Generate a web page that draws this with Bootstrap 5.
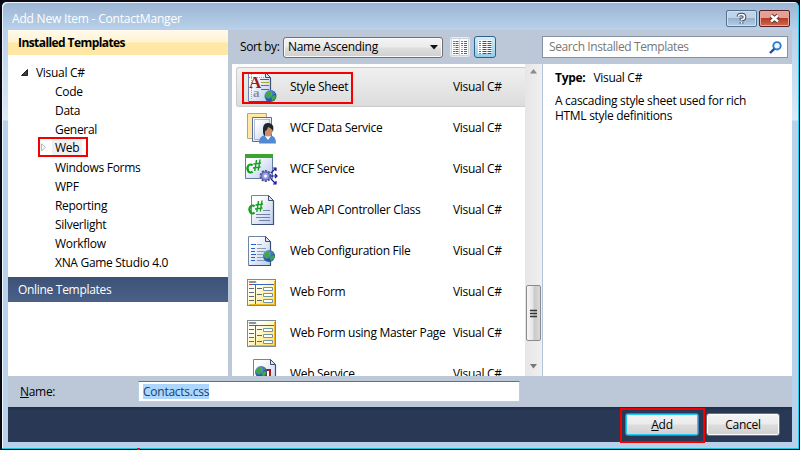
<!DOCTYPE html>
<html lang="en">
<head>
<meta charset="utf-8">
<title>Add New Item - ContactManger</title>
<link href="https://cdn.jsdelivr.net/npm/bootstrap@5.3.0/dist/css/bootstrap.min.css" rel="stylesheet">
<style>
body{width:800px;height:450px;overflow:hidden;background:#0a0a14;font:12px/16px "Open Sans","Noto Sans",sans-serif;color:#000;letter-spacing:-.3px}
.win{width:797px;height:447px;margin:2px 1px 0 2px;background:#b9d1ea;border-right:1px solid #21d0f0;border-bottom:1px solid #21c4dc;border-radius:5px 5px 0 0;padding:0 6px 6px 6px;box-shadow:inset 1px 1px 0 #eef5fc;background-image:linear-gradient(#99b4d3,#b9d1ea 28px,#d8e6f6 110px,#dce9f7 118px,#b9d1ea 119px)}
.titlebar{height:28px;padding:8px 0 0 4px;color:#fff}
.titlebar .cap{letter-spacing:-.2px;line-height:18px}
.wbtn{width:31px;height:17px;border:1px solid #55708f;border-radius:2px;box-shadow:inset 0 0 0 1px #cfe0f2;background:linear-gradient(#bfd3e9 47%,#98b3d0 50%,#b4cce6)}
.wbtn svg,.viewbtn svg{display:block}
.wbtn.close{margin:0 2px;border-color:#5b1f25;box-shadow:inset 0 0 0 1px #e8a79c;background:linear-gradient(#e3a095 45%,#b83b25 50%,#d06a50)}
.client{height:412px;background:#bcc7d8}
.upper{height:346px}
.side{width:220px;background:#fff}
.side-head{height:25px;padding:0 10px;line-height:26px;font-weight:700;background:linear-gradient(#fffaee,#fff3cf 48%,#ffe8a6 52%,#ffe8a6);letter-spacing:-.58px}
.tree{padding-top:8px;height:222px}
.tree div{height:19px;line-height:19px;padding-left:47px}
.tree .root{padding-left:28px;position:relative}
.tree .root svg{position:absolute;left:13px;top:6px}
.tree .sel{position:relative}
.tree .sel b{font-weight:400;background:#f0f0f0;display:inline-block;height:17px;line-height:18px;padding:0 3px;margin-left:-3px;vertical-align:top}
.tree .sel svg{position:absolute;left:33px;top:4px}
.red{position:absolute;border:2px solid #f40000;z-index:3}
.r-web{left:30px;top:-2px;width:50px;height:20px}
.r-style{left:10px;top:8px;width:111px;height:32px}
.r-add{left:-6px;top:-6px;width:85px;height:35px}
.online{height:25px;line-height:26px;padding-left:10px;color:#fff;background:linear-gradient(#3d5277,#4a6086)}
.main{width:560px;margin-left:4px}
.tools{height:34px}
.sortlab{width:39px;margin-left:8px;white-space:nowrap;letter-spacing:-.4px}
.combo{width:160px;height:21px;margin-left:4px;border:1px solid #707070;border-radius:3px;background:linear-gradient(#f4f4f4,#ebebeb 48%,#dedede 52%,#d0d0d0);box-shadow:inset 0 0 0 1px #fbfbfb;padding:0 4px;line-height:18px}
.viewbtn{width:20px;height:20px;margin-left:7px;border:1px solid #e6ecf3;border-radius:2px;background:#c9d4e2;padding:1px}
.viewbtn.on{width:22px;height:22px;margin-left:4px;border:1px solid #2c628b;background:linear-gradient(#d5edfa,#96cdec);border-radius:3px;padding:2px}
.search{width:246px;height:22px;border:1px solid #8492a8;background:#fff;color:#777;padding:0 5px 0 6px;line-height:20px;margin-left:46px;letter-spacing:-.4px}
.list{width:293px;height:312px;background:#fff;overflow:hidden;position:relative;padding-top:3px}
.entry{height:41px;padding-left:15px}
.entry svg{width:30px;height:32px;flex:none;overflow:visible}
.entry .nm{width:163px;margin-left:13px;white-space:nowrap}
.entry.cur{height:40px;margin-left:4px;padding-left:10px;border:1px solid #cbcbcb;border-right:0;border-radius:3px 0 0 3px;background:linear-gradient(#f0f0f0,#dcdcdc)}
.entry .svc{width:32px;margin:0 0 0 -2px}
.sbar{width:17px;background:linear-gradient(90deg,#e6e6e6,#f0f0f0)}
.sbar .up{height:13px;padding-top:5px}
.thumb{width:15px;height:56px;border:1px solid #8b8b8b;border-radius:2px;background:linear-gradient(90deg,#f6f6f6,#e5e5e5 45%,#cacaca 55%,#dadada);margin-top:208px}
.down{margin-top:23px}
.detail{width:250px;background:#fff;border-left:1px solid #b3c3d8;padding:6px 12px;line-height:15px}
.namebar{height:31px;padding-left:12px}
.namelab{width:36px}
.fld{width:382px;height:21px;margin-left:82px;background:#fff;border:1px solid #b5cfe7;border-top-color:#3d7bad;padding:2px 4px}
.fld span{display:block;width:66px;height:15px;line-height:15px;background:#add6ff;color:#143f6b;white-space:nowrap;letter-spacing:-.25px}
.foot{height:35px;gap:7px;background:linear-gradient(#1f2c45,#293955 4px);padding:6px 12px 0 0}
.push{height:23px;border:1px solid #707070;border-radius:3px;background:linear-gradient(#f4f4f4,#ebebeb 48%,#dddddd 52%,#cfcfcf);text-align:center;line-height:22px;box-shadow:inset 0 0 0 1px #fcfcfc;position:relative;width:74px}
.push.def{border-color:#3c7fb1;box-shadow:inset 0 0 0 1px #21c9f5}
.dot{position:absolute;left:137px;top:448px;width:3px;height:2px;background:#f00}
</style>
<script src="https://cdn.jsdelivr.net/npm/bootstrap@5.3.0/dist/js/bootstrap.bundle.min.js"></script>
</head>
<body>
<svg width="0" height="0" class="position-absolute">
<defs>
<linearGradient id="pg" x2="1" y2="1"><stop offset=".2" stop-color="#fff"/><stop offset="1" stop-color="#b9cbed"/></linearGradient>
<linearGradient id="yl" x2="1" y2="1"><stop offset=".3" stop-color="#fffef0"/><stop offset="1" stop-color="#ffe14d"/></linearGradient>
<radialGradient id="bl" cx=".35" cy=".3"><stop stop-color="#8fc4f5"/><stop offset="1" stop-color="#2059a8"/></radialGradient>
<g id="page"><path d="M3.500 1.500h17l5 5v24h-22z" fill="url(#pg)" stroke="#7184a3"/><path d="M25.500 7v23.500H4" fill="none" stroke="#3b5079" stroke-width="1.200"/><path d="M20.500 1.500v5h5z" fill="#dce4f2" stroke="#3f4d68"/></g>
<g id="globe"><circle cx="6" cy="6" r="6" fill="url(#bl)"/><path d="M1 4 4 .8l3 .7-1 2 1 1-3 4-2-1zM7 7l3-2 1.500 1-1 3-3 2zM8 1l3 3-2 0z" fill="#43a63f"/></g>
<g id="form"><rect x="2.500" y="3.500" width="28" height="26" fill="url(#yl)" stroke="#7e8a91"/><path d="M29.500 5v23.500H4" fill="none" stroke="#eeb31e"/><path d="M4 5l1 2 1-2 1 2 1-2 1 2 1-2 1 2" fill="none" stroke="#555e70" stroke-width=".8"/><path d="M6 8.500h23" stroke="#3367c5"/><path d="M4 8.500h2" stroke="#f22"/><path d="M10.500 9v19M4 12.500h5M4 16.500h5M4 20.500h5M4 24.500h5M12 12.500h5M12 18.500h5M12 24.500h5" stroke="#5a6577" /><path d="M18.500 11.500h9v3h-9zM18.500 17.500h9v3h-9zM18.500 23.500h9v3h-9z" fill="#fff" stroke="#7093a8"/></g>
<g id="cs" fill="none" stroke="#14a01e" stroke-width="2.200"><path d="M6.500 4.500A3 4 0 1 0 6.500 10.500"/><path d="M10.500-1 8.800 10M14-1.500 12.300 9.500M7.500 3l7.500-1M7 7l7.500-1" stroke-width="1.400"/></g>
<g id="keys"><path d="M0 1h2v1H0z" fill="#3fa63a"/><path d="M0 3h2v1H0zM0 11h2v1H0z" fill="#f0281e"/><path d="M0 5h2v1H0zM0 13h2v1H0z" fill="#2aa0e8"/><path d="M0 7h2v1H0z" fill="#f0c800"/><path d="M0 9h2v1H0z" fill="#8bc53f"/></g>
</defs></svg>
<div class="win">
 <div class="titlebar d-flex"><span class="cap">Add New Item - ContactManger</span>
  <div class="wbtn ms-auto"><svg width="29" height="15"><path d="M11.500 5.500Q11.500 3.500 14.500 3.500T17.500 6T14.500 8.500V9.500M14.500 11v1.800" fill="none" stroke="#3e4b5c" stroke-width="3.600"/><path d="M11.500 5.500Q11.500 3.500 14.500 3.500T17.500 6T14.500 8.500V9.500M14.500 11v1.800" fill="none" stroke="#fff" stroke-width="1.600"/></svg></div>
  <div class="wbtn close"><svg width="29" height="15"><path d="m11 4.500 7 6m0-6-7 6" stroke="#5b3535" stroke-width="4.400"/><path d="m11 4.500 7 6m0-6-7 6" stroke="#fff" stroke-width="2.400"/></svg></div>
 </div>
 <div class="client">
  <div class="upper d-flex">
   <div class="side">
    <div class="side-head">Installed Templates</div>
    <div class="tree">
     <div class="root"><svg width="8" height="8"><path d="M6.500.500v6h-6z" fill="#404040" stroke="#222"/></svg>Visual C#</div>
     <div>Code</div><div>Data</div><div>General</div>
     <div class="sel"><svg width="6" height="9"><path d="M.500.800v7l4-3.500z" fill="#fff" stroke="#b5b5b5"/></svg><b>Web</b><i class="red r-web"></i></div>
     <div>Windows Forms</div><div>WPF</div><div>Reporting</div><div>Silverlight</div><div>Workflow</div><div>XNA Game Studio 4.0</div>
    </div>
    <div class="online">Online Templates</div>
   </div>
   <div class="main">
    <div class="tools d-flex align-items-center">
     <span class="sortlab">Sort by:</span>
     <div class="combo d-flex justify-content-between align-items-center"><span>Name Ascending</span><svg width="8" height="5"><path d="M0 0h8L4 4.500z" fill="#111"/></svg></div>
     <div class="viewbtn"><svg width="16" height="16"><path fill="#fff" d="M0 0h7v16H0zM8 0h8v16H8z"/><use href="#keys" x="1" y="1"/><use href="#keys" x="9" y="1"/><path d="M5 2v13M13.500 2v13" stroke="#4858d0" stroke-width="3" stroke-dasharray="1 1"/></svg></div>
     <div class="viewbtn on"><svg width="16" height="16"><path fill="#fff" d="M1 1h14v14H1z"/><use href="#keys" x="2" y="1"/><path d="M7.500 2v13M12.500 2v13" stroke="#3444c8" stroke-width="4" stroke-dasharray="1 1"/></svg></div>
     <div class="search d-flex align-items-center"><span>Search Installed Templates</span><svg class="ms-auto" width="13" height="13"><circle cx="8" cy="4.800" r="3.700" fill="#eaf5ff" stroke="#2b7cc9" stroke-width="1.900"/><path d="M5.300 7.800 1 12" stroke="#234a9c" stroke-width="2.400"/></svg></div>
    </div>
    <div class="d-flex" style="height:312px">
     <div class="list"><i class="red r-style"></i>
      <div class="entry cur d-flex align-items-center"><svg viewBox="2 0 30 32"><use href="#page"/><path d="M6.500 3v26M4 6.500h16" stroke="#8ea4d0" stroke-dasharray="1 1"/><path d="M15 8.500h9" stroke="#357b45"/><path d="M16 11.500h8" stroke="#b0a52c"/><path d="M16 14.500h8" stroke="#d14b28"/><path d="M16 18.500h8" stroke="#4569bd"/><text x="4" y="17" font-family="Liberation Serif" font-weight="700" font-size="17" fill="#9d1a20">A</text><text x="8" y="26" font-family="Liberation Serif" font-weight="700" font-size="13" fill="#8a8f99">a</text><use href="#globe" x="19.500" y="19"/></svg><span class="nm">Style Sheet</span><span>Visual C#</span></div>
      <div class="entry d-flex align-items-center"><svg viewBox="2 0 30 32"><path d="M2.500 1.500h19v25h-19z" fill="#ffe9a5" stroke="#b3a67c"/><path d="M7.500 5.500h19v24h-19z" fill="url(#pg)" stroke="#596f97"/><path d="M9.500 7.500h15v20h-15z" fill="none" stroke="#6a80b0" stroke-dasharray="1 1"/><path d="M14 31.500q0-8 6-8h5q6 0 6 8z" fill="#518ad2"/><path d="m20 24 3 4 3-4z" fill="#fff"/><ellipse cx="23" cy="19" rx="4.500" ry="5.500" fill="#c98e6b"/><path d="M18 20q-1-10 6-9 6 1 4 9-1-4-5-5-1 4-3 4l0 5q-2-1-2-4z" fill="#20242b"/></svg><span class="nm">WCF Data Service</span><span>Visual C#</span></div>
      <div class="entry d-flex align-items-center"><svg class="svc" viewBox="2 0 32 32"><path d="M2.500 1.500h27v24h-27z" fill="url(#pg)" stroke="#6179a5"/><path d="M2 1h28v4H2z" fill="#39a52c"/><use href="#cs" x="3" y="8"/><circle cx="22.500" cy="23" r="5" fill="#9498dd" stroke="#4d519f" stroke-width="2" stroke-dasharray="2 1.200"/><circle cx="22.500" cy="23" r="4" fill="#9b9fe3" stroke="#5b5fae"/><circle cx="22.500" cy="23" r="1.500" fill="#fff"/><path d="M28 20l5-5m-3 0h3v3M28 23h6m-2-2 2 2-2 2M28 26l5 5m0-3v3h-3" fill="none" stroke="#1818a2" stroke-width="1.200"/></svg><span class="nm">WCF Service</span><span>Visual C#</span></div>
      <div class="entry d-flex align-items-center"><svg viewBox="2 0 30 32"><use href="#page" x="3"/><path d="M18 16.500h7M11 20.500h14M11 23.500h14M14 26.500h11" stroke="#7183a6"/><use href="#cs" x="3" y="8"/></svg><span class="nm">Web API Controller Class</span><span>Visual C#</span></div>
      <div class="entry d-flex align-items-center"><svg viewBox="2 0 30 32"><use href="#page"/><path d="M6 9.500h5M6 13.500h4M6 16.500h4M6 19.500h5M6 22.500h4M6 25.500h4" stroke="#285fd0"/><path d="M12 9.500h5M12 13.500h9M12 16.500h8M12 19.500h6M12 22.500h7M12 25.500h8" stroke="#8b9bb5"/><use href="#globe" x="18" y="15"/></svg><span class="nm">Web Configuration File</span><span>Visual C#</span></div>
      <div class="entry d-flex align-items-center"><svg viewBox="2 0 30 32"><use href="#form"/></svg><span class="nm">Web Form</span><span>Visual C#</span></div>
      <div class="entry d-flex align-items-center"><svg viewBox="2 0 30 32"><use href="#form"/></svg><span class="nm">Web Form using Master Page</span><span>Visual C#</span></div>
      <div class="entry d-flex align-items-center"><svg viewBox="2 0 30 32"><use href="#page" x="5"/><path d="M19 11h7v10h-7z" fill="#a81a25"/><path d="M22 13h2v7h-2z" fill="#fff"/><use href="#globe" x="10" y="8"/></svg><span class="nm">Web Service</span><span>Visual C#</span></div>
     </div>
     <div class="sbar d-flex flex-column align-items-center">
      <div class="up"><svg class="d-block" width="7" height="5"><path d="M3.500 0 7 4.500H0z" fill="#888"/></svg></div>
      <div class="thumb d-flex align-items-center justify-content-center"><svg width="7" height="9"><path d="M0 1.500h7M0 4.500h7M0 7.500h7" stroke="#333" stroke-width="1.600"/></svg></div>
      <svg class="down" width="7" height="5"><path d="M0 0h7L3.500 4.500z" fill="#777"/></svg>
     </div>
     <div class="detail"><p class="mb-2"><b class="me-2">Type:</b>Visual C#</p><p class="m-0">A cascading style sheet used for rich<br>HTML style definitions</p></div>
    </div>
   </div>
  </div>
  <div class="namebar d-flex align-items-center"><span class="namelab"><u>N</u>ame:</span><div class="fld"><span>Contacts.css</span></div></div>
  <div class="foot d-flex justify-content-end">
   <div class="push def"><u>A</u>dd<i class="red r-add"></i></div><div class="push">Cancel</div>
  </div>
 </div>
</div>
<i class="dot"></i>
</body>
</html>
